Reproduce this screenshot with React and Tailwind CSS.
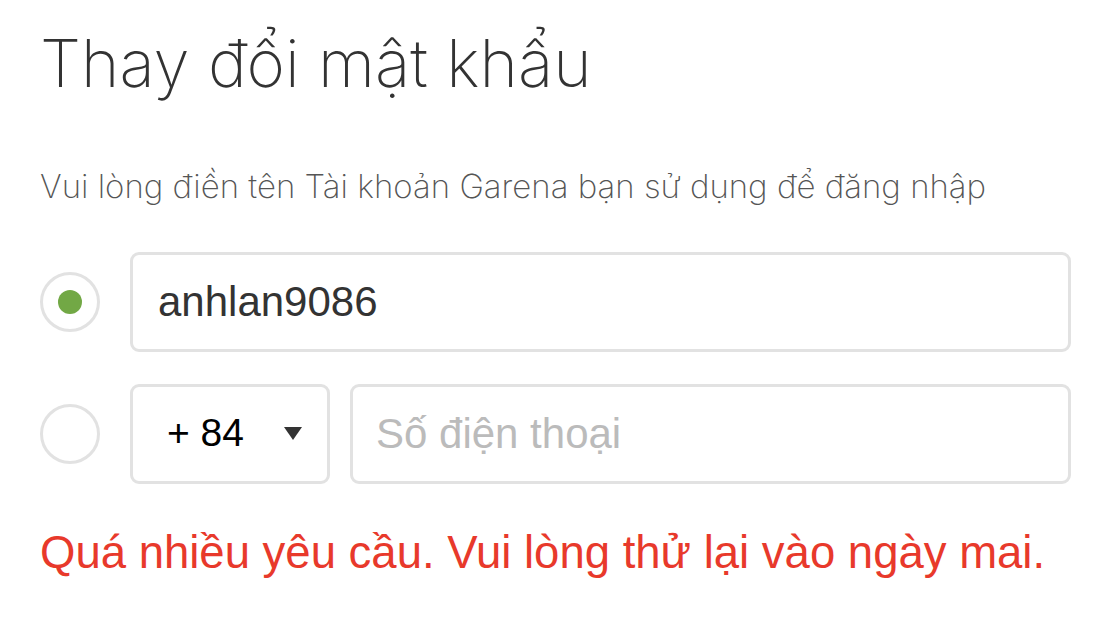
export default function App() {
  return (
    <div className="min-h-screen bg-white pl-[40px] pr-[27px] pt-[31px] font-['Liberation_Sans',Arial,sans-serif]">
      <h1 className="text-[65.5px] leading-none font-extralight text-[#333] font-['Inter',sans-serif]">
        Thay đổi mật khẩu
      </h1>

      <p className="mt-[73px] text-[33px] leading-none font-extralight text-[#555] font-['Inter',sans-serif]">
        Vui lòng điền tên Tài khoản Garena bạn sử dụng để đăng nhập
      </p>

      <div className="mt-[49px] flex flex-col gap-[32px]">
        {/* username row */}
        <div className="flex items-center gap-[30px]">
          <div className="w-[60px] h-[60px] rounded-full border-[3px] border-[#e2e2e2] flex items-center justify-center shrink-0">
            <div className="w-[24px] h-[24px] rounded-full bg-[#72a845]" />
          </div>
          <div className="flex-1 h-[100px] rounded-[9px] border-[3px] border-[#e2e2e2] flex items-center pl-[25px]">
            <span className="text-[42px] text-[#333]">anhlan9086</span>
          </div>
        </div>

        {/* phone row */}
        <div className="flex items-center gap-[30px]">
          <div className="w-[60px] h-[60px] rounded-full border-[3px] border-[#e2e2e2] shrink-0" />
          <div className="flex-1 flex gap-[20px]">
            <div className="w-[200px] h-[100px] rounded-[9px] border-[3px] border-[#e2e2e2] flex items-center justify-between pl-[34px] pr-[25px] shrink-0">
              <span className="text-[39px] text-black">+ 84</span>
              <svg width="18" height="13" viewBox="0 0 18 13">
                <path d="M0 0H18L9 13Z" fill="#333" />
              </svg>
            </div>
            <div className="flex-1 h-[100px] rounded-[9px] border-[3px] border-[#e2e2e2] flex items-center pl-[23px]">
              <span className="text-[42px] text-[#bbb]">Số điện thoại</span>
            </div>
          </div>
        </div>
      </div>

      <p className="mt-[46px] text-[45.5px] leading-none text-[#e8392b]">
        Quá nhiều yêu cầu. Vui lòng thử lại vào ngày mai.
      </p>
    </div>
  )
}
